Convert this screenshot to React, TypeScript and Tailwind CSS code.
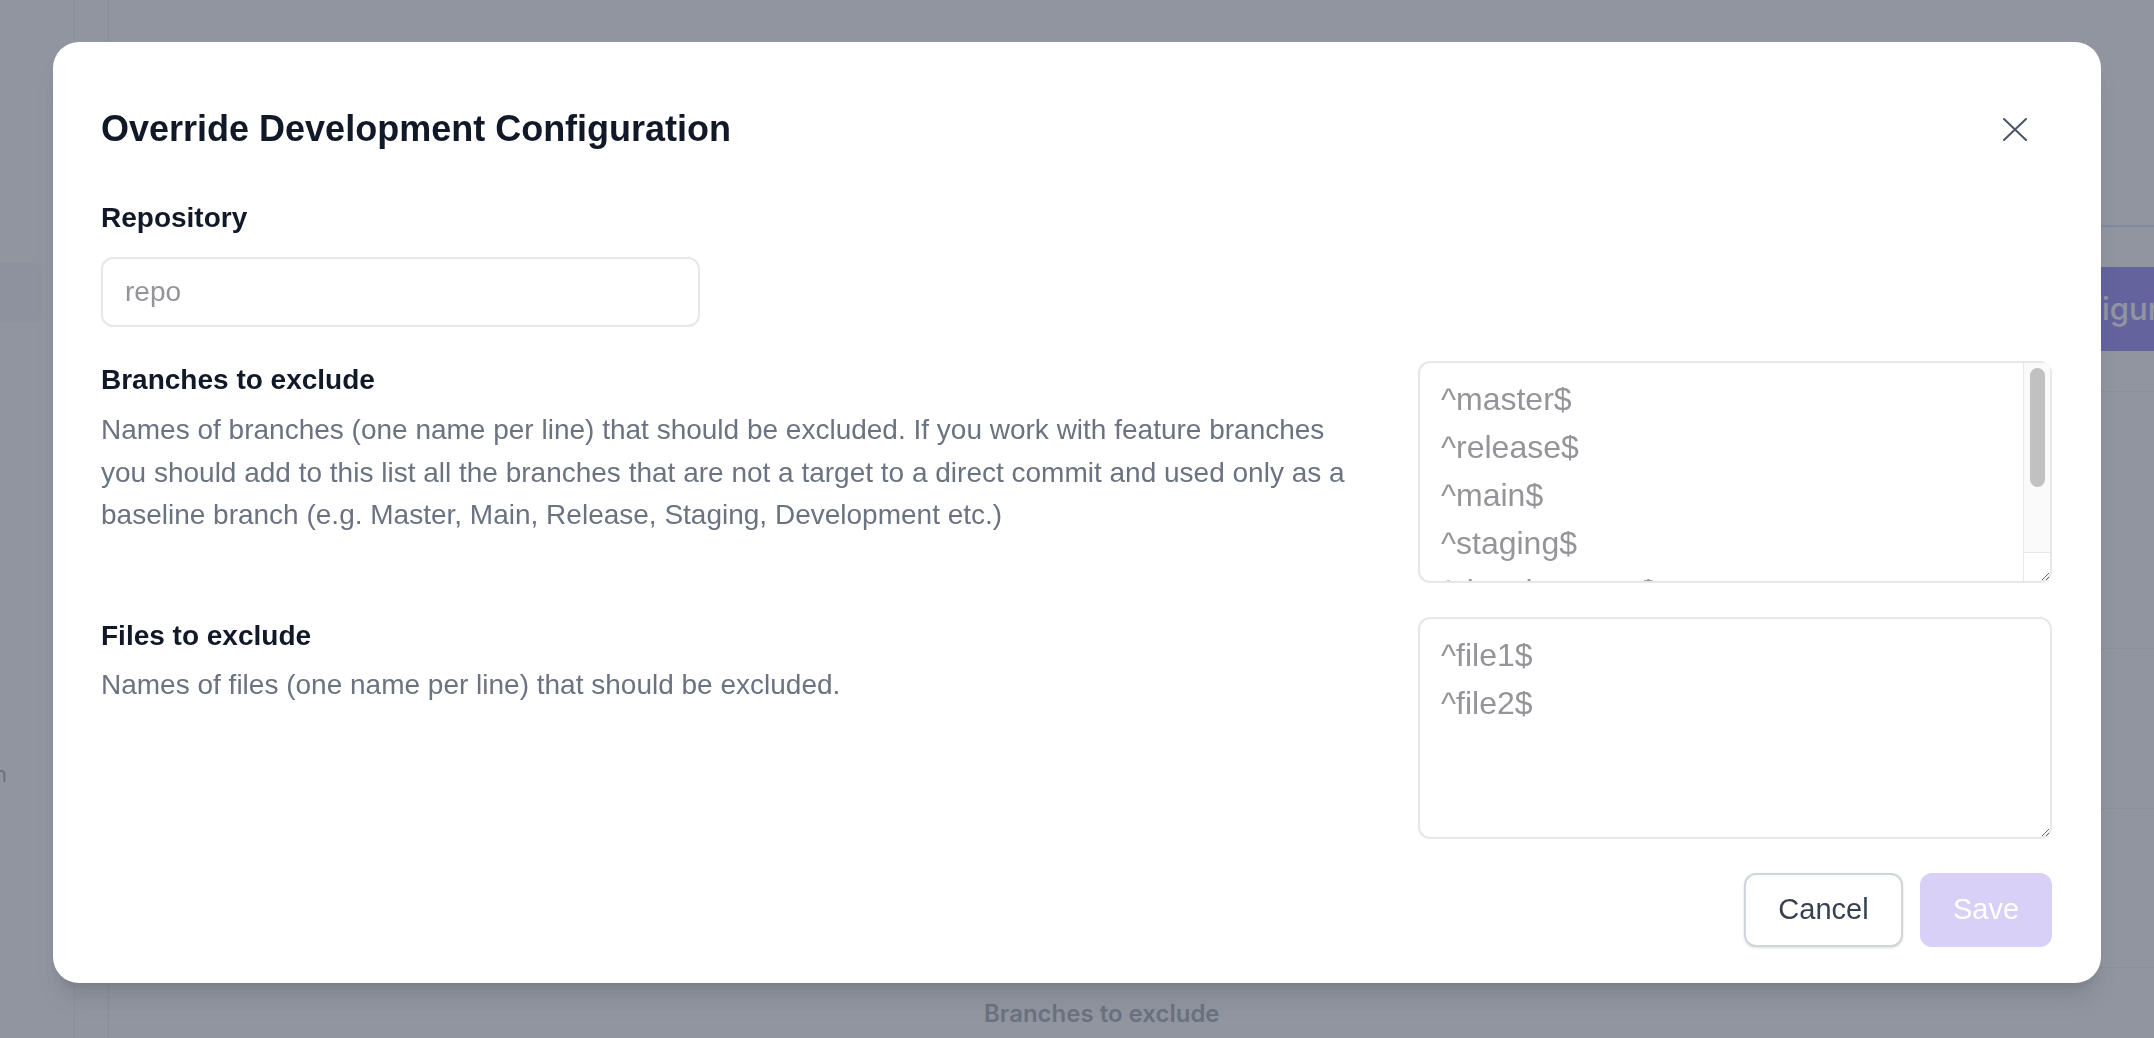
import { useState } from 'react';

// Override dialog shown over the repository settings page

const branchValue = '^master$\n^release$\n^main$\n^staging$\n^development$\n\n';
const fileValue = '^file1$\n^file2$';

export default function App() {
  return (
    <div className="relative flex h-[1038px] w-[2154px] overflow-hidden bg-white font-['Inter',sans-serif]">
      <BackgroundPage />
      <div className="fixed inset-0 flex justify-center bg-[rgba(107,114,128,0.75)] pt-[42px]">
        <OverrideDialog />
      </div>
    </div>
  );
}

// Page underneath the overlay
function BackgroundPage() {
  return (
    <>
      <div className="flex w-[75px] shrink-0 flex-col border-r border-gray-200">
        <div className="mt-[263px] h-[59px] w-[41px] rounded-r-lg bg-gray-100" />
        <span className="mt-[436px] -ml-[6px] text-[22px] text-gray-500">n</span>
      </div>
      <div className="w-[34px] shrink-0 border-r border-gray-200" />
      <div className="flex flex-1 flex-col">
        <div className="h-[227px] shrink-0 border-b-2 border-indigo-200" />
        <div className="flex h-[165px] shrink-0 items-start justify-end border-b border-gray-200 pt-[40px]">
          <button className="-mr-[53px] flex h-[84px] w-[207px] items-center whitespace-nowrap rounded-lg bg-indigo-600 pl-[30px] text-[31px] font-medium text-white">
            Configure
          </button>
        </div>
        <div className="h-[257px] shrink-0 border-b border-gray-200" />
        <div className="h-[160px] shrink-0 border-b border-gray-200" />
        <div className="h-[159px] shrink-0 border-b border-gray-200" />
        <div className="flex flex-1 items-start pl-[875px] pt-[28px]">
          <span className="text-[24px] font-semibold text-gray-500">Branches to exclude</span>
        </div>
      </div>
    </>
  );
}

function OverrideDialog() {
  const [repo, setRepo] = useState('');
  const [branches, setBranches] = useState(branchValue);
  const [files, setFiles] = useState(fileValue);

  return (
    <div className="h-fit w-[2048px] rounded-[26px] bg-white pt-[63px] pb-[36px] pl-[48px] pr-[49px] font-['Liberation_Sans',Arial,sans-serif] shadow-xl">
      {/* Header */}
      <div className="flex h-[48px] items-center justify-between">
        <h2 className="text-[36px] font-bold leading-[48px] text-[#111827]">
          Override Development Configuration
        </h2>
        <button className="mr-[13px] flex h-[48px] w-[48px] items-center justify-center text-[#4b5563]">
          <svg width="24" height="23" viewBox="0 0 24 23" fill="none" stroke="currentColor" strokeWidth="2" strokeLinecap="round">
            <path d="M1 1L23 22M23 1L1 22" />
          </svg>
        </button>
      </div>

      {/* Repository */}
      <label className="mt-[47px] block text-[28px] font-bold leading-[36px] text-[#111827]">Repository</label>
      <input
        value={repo}
        onChange={e => setRepo(e.target.value)}
        placeholder="repo"
        className="mt-[21px] block h-[70px] w-[599px] rounded-[12px] border-2 border-[#e5e7eb] px-[22px] text-[28px] text-[#111827] outline-none placeholder:text-[#94949a]"
      />

      {/* Branches */}
      <div className="mt-[34px] flex items-start justify-between">
        <div className="w-[1262px] pt-[1px]">
          <h3 className="text-[28px] font-bold leading-[36px] text-[#111827]">Branches to exclude</h3>
          <p className="mt-[11px] text-[28px] leading-[42.5px] text-[#6b7280]">
            Names of branches (one name per line) that should be excluded. If you work with feature branches
            you should add to this list all the branches that are not a target to a direct commit and used only as a
            baseline branch (e.g. Master, Main, Release, Staging, Development etc.)
          </p>
        </div>
        <div className="relative">
          <textarea
            value={branches}
            onChange={e => setBranches(e.target.value)}
            className="block h-[222px] w-[634px] resize-y overflow-hidden rounded-[12px] border-2 border-[#e5e7eb] bg-white pl-[21px] pr-[37px] py-[12px] text-[32px] leading-[48px] text-[#94949a] outline-none"
          />
          {/* scrollbar */}
          <div className="pointer-events-none absolute right-[2px] top-[2px] flex h-[218px] w-[27px] flex-col border-l border-[#e8e8e8]">
            <div className="h-[189px] bg-[#fafafa] pt-[5px]">
              <div className="mx-auto h-[119px] w-[15px] rounded-full bg-[#c1c1c1]" />
            </div>
            <div className="flex-1 border-t border-[#e8e8e8]" />
          </div>
        </div>
      </div>

      {/* Files */}
      <div className="mt-[34px] flex items-start justify-between">
        <div className="w-[1262px] pt-[1px]">
          <h3 className="text-[28px] font-bold leading-[36px] text-[#111827]">Files to exclude</h3>
          <p className="mt-[10px] text-[28px] leading-[42.5px] text-[#6b7280]">
            Names of files (one name per line) that should be excluded.
          </p>
        </div>
        <textarea
          value={files}
          onChange={e => setFiles(e.target.value)}
          className="block h-[222px] w-[634px] resize-y rounded-[12px] border-2 border-[#e5e7eb] bg-white pl-[21px] pr-[10px] py-[12px] text-[32px] leading-[48px] text-[#94949a] outline-none"
        />
      </div>

      {/* Footer */}
      <div className="mt-[34px] flex justify-end gap-[17px]">
        <button className="h-[74px] w-[159px] rounded-[12px] border-2 border-[#d1d5db] bg-white text-[29px] text-[#374151] shadow-sm">
          Cancel
        </button>
        <button disabled className="h-[74px] w-[132px] rounded-[12px] bg-[#d8d0f7] text-[29px] text-white">
          Save
        </button>
      </div>
    </div>
  );
}
